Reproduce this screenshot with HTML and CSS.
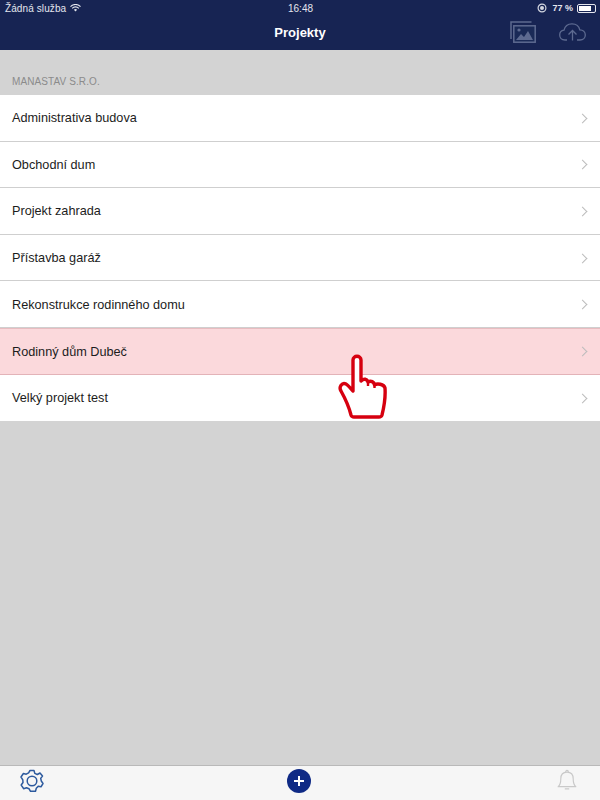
FILE: index.html
```html
<!DOCTYPE html>
<html lang="cs">
<head>
    <meta charset="UTF-8">
    <meta name="viewport" content="width=device-width, initial-scale=1.0">
    <title>Projekty</title>
    <link rel="stylesheet" href="styles.css">
</head>
<body>
    <div class="app">
        <div class="header-bar">
            <div class="status-bar">
                <div class="status-left">
                    <span>Žádná služba</span>
                    <svg class="wifi" width="11" height="8" viewBox="0 0 11 8">
                        <path d="M0.5 2.6 A7 7 0 0 1 10.5 2.6 M2.2 4.3 A4.6 4.6 0 0 1 8.8 4.3" fill="none" stroke="#e4e6ee" stroke-width="1.2"/>
                        <path d="M3.9 5.8 A2.2 2.2 0 0 1 7.1 5.8 L5.5 7.6 Z" fill="#e4e6ee"/>
                    </svg>
                </div>
                <div class="status-time">16:48</div>
                <div class="status-right">
                    <svg width="10" height="10" viewBox="0 0 10 10">
                        <circle cx="5" cy="5" r="3.9" fill="none" stroke="#d5d8e2" stroke-width="1.2"/>
                        <circle cx="5" cy="5" r="2" fill="#d5d8e2"/>
                    </svg>
                    <span class="battery-text">77 %</span>
                    <div class="battery"><div class="battery-level"></div></div>
                </div>
            </div>
            <div class="nav-bar">
                <div class="nav-title">Projekty</div>
                <div class="nav-icons">
                    <svg width="26" height="22" viewBox="0 0 26 22">
                        <path d="M1 18 V1 H21.500" fill="none" stroke="#5d6a90" stroke-width="1.5"/>
                        <rect x="3.800" y="4.800" width="21.400" height="16.400" fill="#1a2a57" stroke="#5d6a90" stroke-width="1.500"/>
                        <circle cx="9" cy="9" r="1.600" fill="#5d6a90"/>
                        <path d="M6 19 L11 13 L14 16 L18 10 L23 19 Z" fill="#5d6a90"/>
                    </svg>
                    <svg width="27" height="18" viewBox="0 0 27 18">
                        <path d="M8 17 H6 C2.500 17 0.700 14.600 0.700 12 C0.700 9.500 2.500 7.500 5 7.200 C5.800 3.400 9 0.800 13 0.800 C17 0.800 20 3.300 20.800 6.800 C24 6.800 26.300 9 26.300 12 C26.300 14.800 24.200 17 21 17 H18" fill="none" stroke="#5d6a90" stroke-width="1.300"/>
                        <path d="M13.500 17.500 V8 M9.500 11.500 L13.500 7.500 L17.500 11.500" fill="none" stroke="#5d6a90" stroke-width="1.300"/>
                    </svg>
                </div>
            </div>
        </div>

        <div class="content">
            <div class="section-title">MANASTAV S.R.O.</div>
            <div class="project-list">
                <div class="project-row"><span>Administrativa budova</span><span class="chevron"></span></div>
                <div class="project-row"><span>Obchodní dum</span><span class="chevron"></span></div>
                <div class="project-row"><span>Projekt zahrada</span><span class="chevron"></span></div>
                <div class="project-row"><span>Přístavba garáž</span><span class="chevron"></span></div>
                <div class="project-row"><span>Rekonstrukce rodinného domu</span><span class="chevron"></span></div>
                <div class="project-row selected"><span>Rodinný dům Dubeč</span><span class="chevron"></span></div>
                <div class="project-row"><span>Velký projekt test</span><span class="chevron"></span></div>
            </div>
        </div>

        <div class="tab-bar">
            <svg width="24" height="24" viewBox="0 0 24 24">
                <path d="M10 1.500 H14 L14.800 4.400 L17.300 5.500 L20 4 L22.500 7 L20.700 9.400 L21.300 12 L23 14.500 L21 17.800 L18.200 17.300 L16.300 19.300 L15.500 22.300 H10.500 L9 19.700 L6.500 18.700 L3.600 19.700 L1.200 16 L3 13.500 L2.800 10.800 L1 8 L3.400 4.500 L6.200 5.200 L8.600 3.800 Z" fill="none" stroke="#2d5a9e" stroke-width="1.500" stroke-linejoin="round"/>
                <circle cx="12" cy="12" r="4.800" fill="none" stroke="#2d5a9e" stroke-width="1.500"/>
            </svg>
            <div class="add-button"></div>
            <svg class="bell" width="20" height="23" viewBox="0 0 22 26">
                <path d="M1 20 C3.500 18 4 15.500 4 11 C4 6.500 6.500 3.500 11 3.500 C15.500 3.500 18 6.500 18 11 C18 15.500 18.500 18 21 20 Z" fill="none" stroke="#c9c9c9" stroke-width="1.300" stroke-linejoin="round"/>
                <path d="M9.500 3.500 C9.500 1 12.500 1 12.500 3.500 M8.500 22.500 H13.500" fill="none" stroke="#c9c9c9" stroke-width="1.300"/>
            </svg>
        </div>

        <svg class="hand" width="52" height="66" viewBox="0 0 52 66">
            <path d="M15 38 V7 C15 2 23 2 23 7 V28 C26 25 29 26 30 29 C33 27 36 29 36.500 32 C39 30 46 31 47 35 C47.500 42 46 54 44 62 C43.500 63.500 43 64 41 64 H16 C14 64 13.500 63.500 13 62 C11 54 8 47 3 38 C0.500 34 4 29 8 31 C10 32 13 36 15 38 Z" fill="#fff" stroke="#d6000f" stroke-width="3.400" stroke-linejoin="round"/>
            <path d="M30 29 V33 M36.500 32 V35" fill="none" stroke="#d6000f" stroke-width="2.400"/>
        </svg>
    </div>
</body>
</html>
```

FILE: styles.css
```css
body, html {
    margin: 0;
    padding: 0;
    background-color: #d3d3d3;
    font-family: "Liberation Sans", Arial, sans-serif;
}

.app {
    position: relative;
    width: 600px;
    height: 800px;
    display: flex;
    flex-direction: column;
    overflow: hidden;
}

.header-bar {
    height: 50px;
    background-color: #172453;
    color: #fff;
    flex-shrink: 0;
}

.status-bar {
    display: grid;
    grid-template-columns: 1fr auto 1fr;
    align-items: center;
    height: 16px;
    padding: 0 4px 0 5px;
    font-size: 10px;
    color: #e4e6ee;
}

.status-left {
    display: flex;
    align-items: center;
    gap: 4px;
    letter-spacing: 0.1px;
}

.status-time {
    font-size: 10px;
}

.status-right {
    display: flex;
    align-items: center;
    justify-content: flex-end;
    gap: 4px;
}

.battery-text {
    font-weight: bold;
    font-size: 9px;
    margin-left: 1px;
}

.battery {
    width: 15px;
    height: 5px;
    border: 1px solid #e4e6ee;
    border-radius: 2px;
    padding: 1px;
}

.battery-level {
    width: 77%;
    height: 100%;
    background-color: #fff;
}

.nav-bar {
    position: relative;
    height: 34px;
    display: flex;
    align-items: center;
    justify-content: center;
}

.nav-title {
    font-size: 13px;
    font-weight: bold;
    margin-bottom: 1px;
}

.nav-icons {
    position: absolute;
    top: 5px;
    right: 14px;
    display: flex;
    align-items: center;
    gap: 23px;
}

.content {
    flex: 1;
}

.section-title {
    height: 45px;
    box-sizing: border-box;
    padding: 26px 12px 0;
    font-size: 10px;
    line-height: 12px;
    letter-spacing: 0.1px;
    color: #8b8b8b;
}

.project-list {
    background-color: #fff;
}

.project-row {
    height: 46.600px;
    box-sizing: border-box;
    display: flex;
    align-items: center;
    justify-content: space-between;
    padding: 1px 12px 0;
    font-size: 12.700px;
    color: #1c1c1c;
    border-bottom: 1px solid #cfcfcf;
}

.project-row:last-child {
    border-bottom: none;
}

.project-row.selected {
    background-color: #fbd9dc;
    border-top: 1px solid #e8bcc0;
    border-bottom: 1px solid #e3b3b8;
}

.chevron {
    width: 6px;
    height: 6px;
    margin-right: 2px;
    border-top: 1.500px solid #bcbcbc;
    border-right: 1.500px solid #bcbcbc;
    transform: rotate(45deg);
}

.tab-bar {
    height: 35px;
    box-sizing: border-box;
    flex-shrink: 0;
    display: flex;
    align-items: center;
    justify-content: space-between;
    padding: 0 23px 5px 20px;
    background-color: #f6f6f6;
    border-top: 1px solid #b9b9b9;
}

.add-button {
    position: relative;
    width: 24px;
    height: 24px;
    margin-right: 4px;
    border-radius: 50%;
    background-color: #0f2a85;
}

.add-button::before,
.add-button::after {
    content: "";
    position: absolute;
    background-color: #fff;
}

.add-button::before {
    left: 7px;
    top: 11px;
    width: 10px;
    height: 2px;
}

.add-button::after {
    left: 11px;
    top: 7px;
    width: 2px;
    height: 10px;
}

.hand {
    position: absolute;
    left: 338px;
    top: 353px;
}
```
